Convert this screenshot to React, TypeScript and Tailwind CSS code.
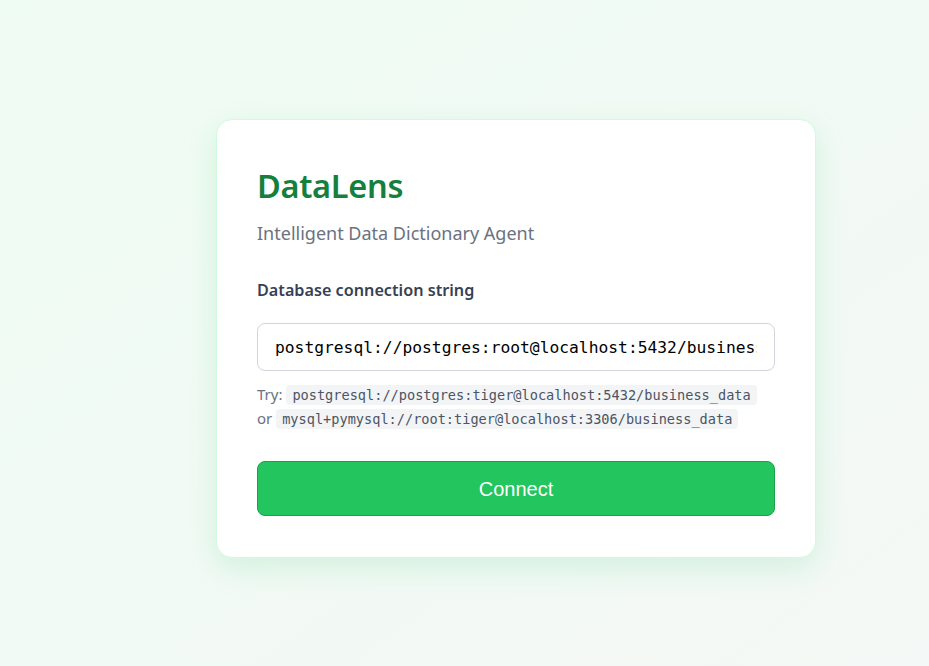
import { useState } from 'react';

export default function App() {
  const [conn, setConn] = useState('postgresql://postgres:root@localhost:5432/business_data');

  return (
    <div className="min-h-screen w-full bg-gradient-to-br from-[#effcf3] to-[#f4f8f6] font-['Noto_Sans',sans-serif]">
      <div className="pt-[119px] pl-[216px]">
        <div className="w-[600px] bg-white border border-[#d1fadf] rounded-2xl shadow-[0_10px_30px_rgba(34,197,94,0.15)] px-10 pt-[46px] pb-[41px]">
          <h1 className="text-[32.5px] leading-[40px] font-semibold text-[#15803d] tracking-[-0.3px]">DataLens</h1>
          <p className="mt-[15px] text-[18px] leading-6 text-[#6b7280]">Intelligent Data Dictionary Agent</p>

          <label className="block mt-[33px] text-[16.2px] leading-6 font-semibold text-[#374151]">
            Database connection string
          </label>

          <input
            type="text"
            value={conn}
            onChange={(e) => setConn(e.target.value)}
            className="mt-[21px] w-full h-12 px-[17px] border border-[#d1d5db] rounded-lg text-[16.3px] text-black font-['DejaVu_Sans_Mono',monospace] focus:outline-none"
          />

          <div className="mt-[11px] text-[15px] leading-[24px] text-[#6b7280]">
            <div className="h-6">
              Try:{' '}
              <code className="px-[6px] py-[2px] leading-none bg-[#f3f4f6] rounded text-[13.6px] font-['DejaVu_Sans_Mono',monospace] text-[#4b5563]">
                postgresql://postgres:tiger@localhost:5432/business_data
              </code>
            </div>
            <div className="h-6">
              or{' '}
              <code className="px-[6px] py-[2px] leading-none bg-[#f3f4f6] rounded text-[13.6px] font-['DejaVu_Sans_Mono',monospace] text-[#4b5563]">
                mysql+pymysql://root:tiger@localhost:3306/business_data
              </code>
            </div>
          </div>

          <button className="mt-[31px] w-full h-[55px] bg-[#22c55e] border border-[#16a34a] rounded-lg text-white text-[20px] font-['Liberation_Sans',sans-serif]">
            Connect
          </button>
        </div>
      </div>
    </div>
  );
}
